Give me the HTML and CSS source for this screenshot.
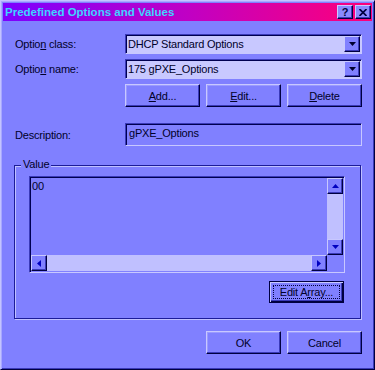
FILE: index.html
```html
<!DOCTYPE html>
<html>
<head>
<meta charset="utf-8">
<title>Predefined Options and Values</title>
<link rel="stylesheet" href="styles.css">
</head>
<body>
<div class="window">
  <div class="titlebar">
    <span class="title">Predefined Options and Values</span>
    <div class="tbtns">
      <span class="tbtn tq">?</span>
      <span class="tbtn"><svg width="8" height="7" viewBox="0 0 8 7"><path d="M0.5 0 L7.5 7 M7.5 0 L0.5 7" stroke="#000040" stroke-width="1.7" fill="none"/></svg></span>
    </div>
  </div>
  <div class="content">
    <div class="row r1">
      <span class="lbl">Optio<u>n</u> class:</span>
      <div class="combo"><span class="ctext">DHCP Standard Options</span><span class="drop"><svg width="7" height="4" viewBox="0 0 7 4"><polygon points="0,0 7,0 3.5,4" fill="#000030"/></svg></span></div>
    </div>
    <div class="row r2">
      <span class="lbl">Optio<u>n</u> name:</span>
      <div class="combo"><span class="ctext">175 gPXE_Options</span><span class="drop"><svg width="7" height="4" viewBox="0 0 7 4"><polygon points="0,0 7,0 3.5,4" fill="#000030"/></svg></span></div>
    </div>
    <div class="row r3">
      <span class="lbl"></span>
      <div class="btnrow">
        <span class="btn"><u>A</u>dd...</span>
        <span class="btn"><u>E</u>dit...</span>
        <span class="btn"><u>D</u>elete</span>
      </div>
    </div>
    <div class="row r4">
      <span class="lbl">Description:</span>
      <div class="field">gPXE_Options</div>
    </div>
    <div class="group">
      <span class="glabel">Value</span>
      <div class="textarea">
        <div class="tacell">00</div>
        <div class="vscroll">
          <span class="sbtn"><svg width="7" height="4" viewBox="0 0 7 4"><polygon points="3.5,0 7,4 0,4" fill="#0000c0"/></svg></span>
          <span class="strack"></span>
          <span class="sbtn"><svg width="7" height="4" viewBox="0 0 7 4"><polygon points="0,0 7,0 3.5,4" fill="#0000c0"/></svg></span>
        </div>
        <div class="hscroll">
          <span class="sbtn"><svg width="4" height="7" viewBox="0 0 4 7"><polygon points="4,0 4,7 0,3.5" fill="#0000c0"/></svg></span>
          <span class="strack"></span>
          <span class="sbtn"><svg width="4" height="7" viewBox="0 0 4 7"><polygon points="0,0 4,3.5 0,7" fill="#0000c0"/></svg></span>
        </div>
        <div class="corner"></div>
      </div>
      <span class="btn default"><span class="focus">Edit A<u>r</u>ray...</span></span>
    </div>
    <div class="footer">
      <span class="btn">OK</span>
      <span class="btn">Cancel</span>
    </div>
  </div>
</div>
</body>
</html>
```

FILE: styles.css
```css
* { box-sizing: border-box; }
html, body { margin: 0; padding: 0; }
body {
  width: 375px;
  height: 370px;
  overflow: hidden;
  background: #8080ff;
  font-family: "Liberation Sans", Arial, sans-serif;
  font-size: 11px;
  letter-spacing: -0.2px;
  color: #00002a;
}
u { text-decoration: underline; text-underline-offset: 1px; }

.window {
  width: 375px;
  height: 370px;
  border: 1px solid;
  border-color: #c4c4ff #000040 #000040 #c4c4ff;
  padding: 2px;
  background: #8080ff;
  box-shadow: inset 1px 1px 0 #a8a8ff, inset -1px -1px 0 #3a3ab8;
  display: flex;
  flex-direction: column;
}

.titlebar {
  flex: none;
  height: 18px;
  display: flex;
  align-items: center;
  justify-content: space-between;
  padding: 0 1px 0 2px;
  background: linear-gradient(90deg, #7c00ff 0%, #c000c4 50%, #ff0078 100%);
}
.title {
  color: #3fd4ff;
  font-weight: bold;
  font-size: 11.5px;
  letter-spacing: 0;
  white-space: nowrap;
}
.tbtns { display: flex; gap: 2px; }
.tbtn {
  width: 16px;
  height: 14px;
  background: #8a8aff;
  border: 1px solid;
  border-color: #c8c8ff #000040 #000040 #c8c8ff;
  box-shadow: inset -1px -1px 0 #3a3ab8;
  display: flex;
  align-items: center;
  justify-content: center;
  color: #000040;
}
.tq { font-weight: bold; font-size: 11px; line-height: 1; letter-spacing: 0; }

.content {
  flex: 1;
  padding: 13px 10px 0 11px;
  display: flex;
  flex-direction: column;
}
.row { display: flex; align-items: center; }
.r2, .r3 { margin-top: 5px; }
.r4 { margin-top: 16px; }
.lbl { width: 111px; flex: none; padding-left: 1px; white-space: nowrap; }

.combo {
  width: 237px;
  height: 20px;
  border: 1px solid;
  border-color: #3a3ab8 #c8c8ff #c8c8ff #3a3ab8;
  box-shadow: inset 1px 1px 0 #000050;
  background: #c8c8ff;
  display: flex;
  align-items: center;
  justify-content: space-between;
  padding: 1px 1px 1px 2px;
}
.ctext { white-space: nowrap; }
.drop {
  width: 16px;
  height: 16px;
  background: #8080ff;
  border: 1px solid;
  border-color: #c8c8ff #000040 #000040 #c8c8ff;
  box-shadow: inset -1px -1px 0 #3a3ab8;
  display: flex;
  align-items: center;
  justify-content: center;
}

.btnrow { width: 237px; display: flex; gap: 6px; }
.btn {
  width: 75px;
  height: 23px;
  flex: none;
  background: #8080ff;
  border: 1px solid;
  border-color: #c8c8ff #000040 #000040 #c8c8ff;
  box-shadow: inset -1px -1px 0 #3a3ab8, inset 1px 1px 0 #9a9aff;
  display: flex;
  align-items: center;
  justify-content: center;
  white-space: nowrap;
}

.field {
  width: 237px;
  height: 23px;
  border: 1px solid;
  border-color: #3a3ab8 #c8c8ff #c8c8ff #3a3ab8;
  box-shadow: inset 1px 1px 0 #000050;
  background: #8080ff;
  padding: 3px 0 0 3px;
  white-space: nowrap;
}

.group {
  position: relative;
  margin-top: 19px;
  width: 347px;
  height: 154px;
  border: 1px solid #1c1c98;
  box-shadow: inset 1px 1px 0 #c0c0ff, 1px 1px 0 #c0c0ff;
  padding: 10px 15px 0 14px;
  display: flex;
  flex-direction: column;
}
.glabel {
  position: absolute;
  top: -8px;
  left: 6px;
  padding: 0 2px;
  background: #8080ff;
  line-height: 13px;
}

.textarea {
  width: 316px;
  height: 97px;
  border: 1px solid;
  border-color: #3a3ab8 #c8c8ff #c8c8ff #3a3ab8;
  box-shadow: inset 1px 1px 0 #000050;
  padding: 1px;
  display: grid;
  grid-template-columns: 1fr 16px;
  grid-template-rows: 1fr 16px;
  background: #8080ff;
}
.tacell { padding: 2px 0 0 1px; line-height: 13px; }
.vscroll { display: flex; flex-direction: column; }
.hscroll { display: flex; flex-direction: row; }
.strack { flex: 1; background: #c0c0ff; }
.sbtn {
  width: 16px;
  height: 16px;
  flex: none;
  background: #8080ff;
  border: 1px solid;
  border-color: #c8c8ff #000040 #000040 #c8c8ff;
  box-shadow: inset -1px -1px 0 #3a3ab8;
  display: flex;
  align-items: center;
  justify-content: center;
}
.corner { background: #8080ff; }

.btn.default {
  align-self: flex-end;
  margin-top: 8px;
  margin-right: 1px;
  height: 22px;
  border: 1px solid #000040;
  box-shadow: inset 1px 1px 0 #c8c8ff, inset -1px -1px 0 #000040, inset -2px -2px 0 #3a3ab8;
  padding: 3px;
}
.focus {
  width: 100%;
  height: 100%;
  border: 1px dotted #000040;
  display: flex;
  align-items: center;
  justify-content: center;
}

.footer {
  margin-top: 12px;
  display: flex;
  justify-content: flex-end;
  gap: 6px;
}
```
